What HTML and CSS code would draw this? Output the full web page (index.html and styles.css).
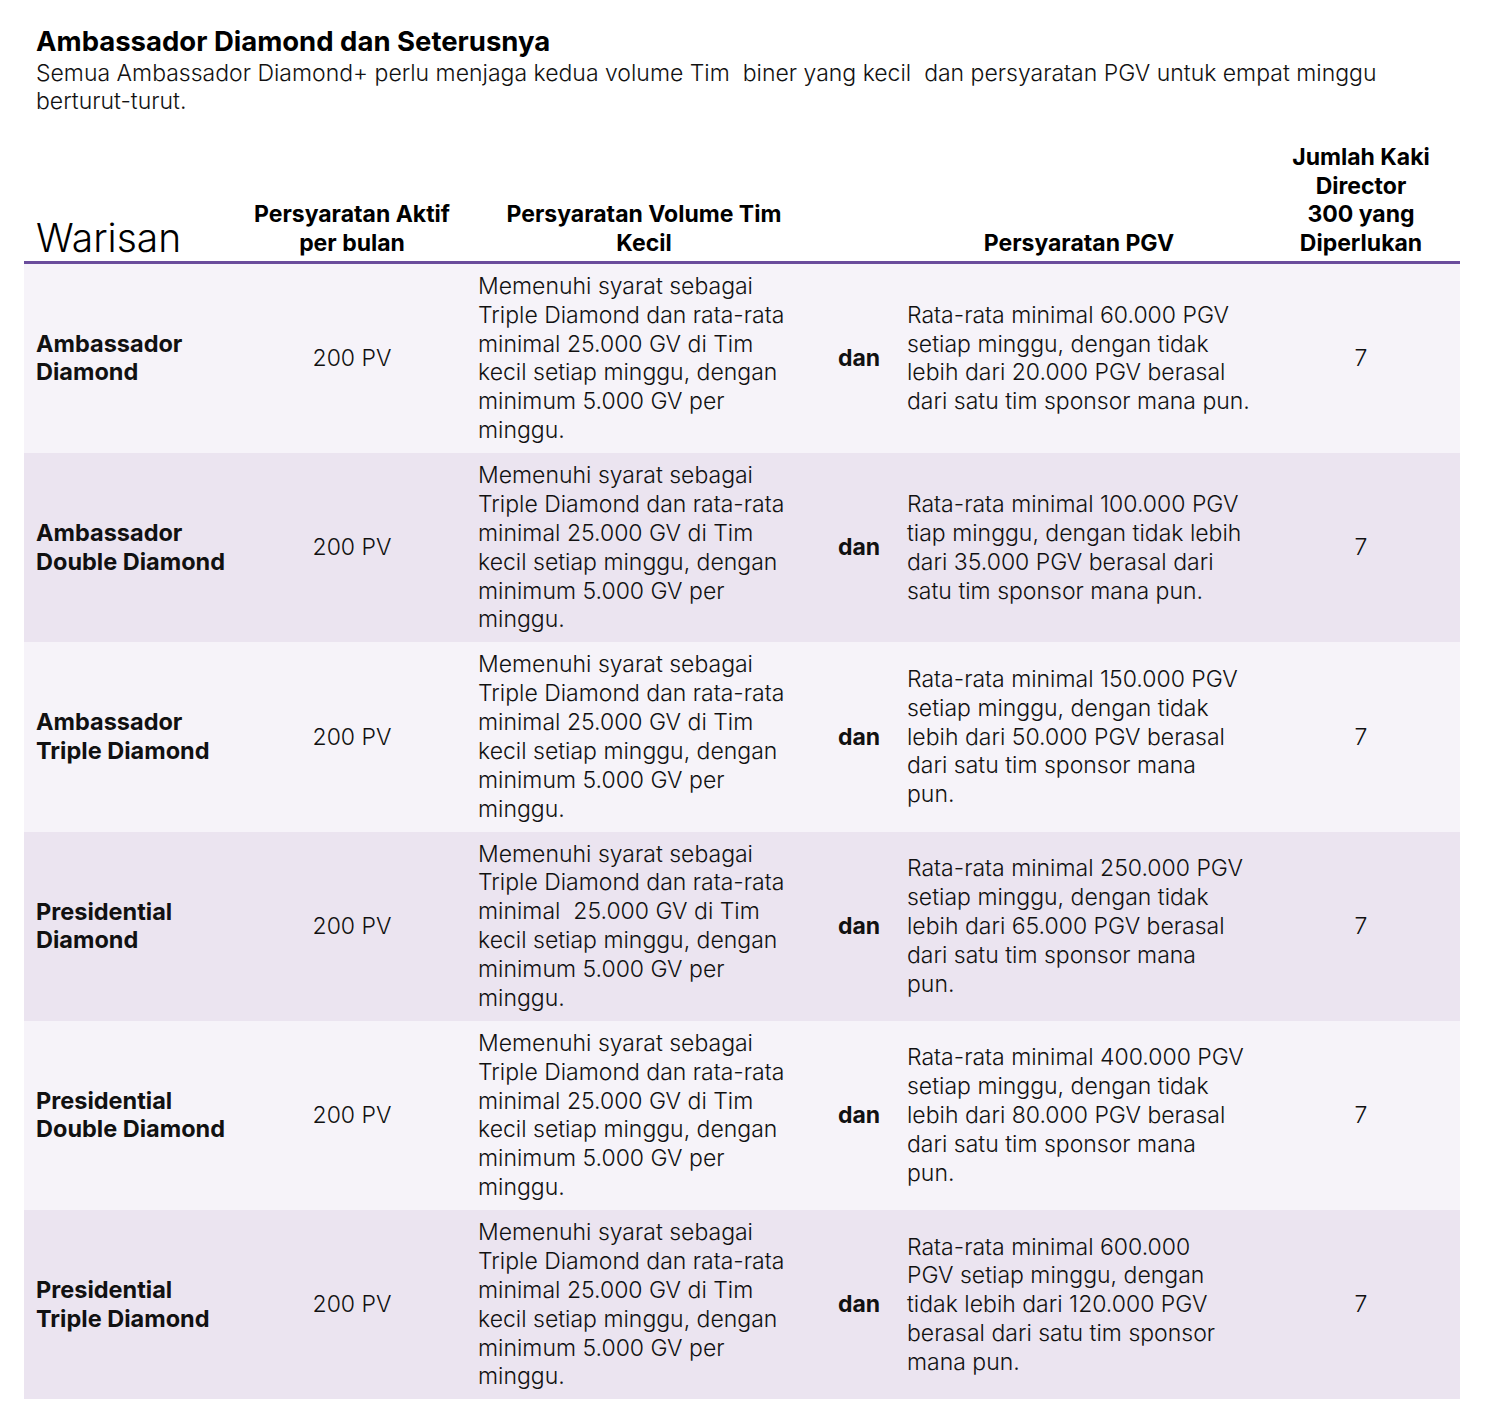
FILE: index.html
```html
<!DOCTYPE html>
<html lang="id">
<head>
<meta charset="utf-8">
<title>Ambassador Diamond dan Seterusnya</title>
<link rel="stylesheet" href="styles.css">
</head>
<body>
<main class="page">
  <h1 class="title">Ambassador Diamond dan Seterusnya</h1>
  <p class="lead">Semua Ambassador Diamond+ perlu menjaga kedua volume Tim&nbsp; biner yang kecil&nbsp; dan persyaratan PGV untuk empat minggu<br>berturut-turut.</p>

  <table class="ranks">
    <colgroup>
      <col class="w-rank">
      <col class="w-active">
      <col class="w-volume">
      <col class="w-and">
      <col class="w-pgv">
      <col class="w-legs">
    </colgroup>
    <thead>
      <tr>
        <th class="h-rank">Warisan</th>
        <th class="h-center">Persyaratan Aktif<br>per bulan</th>
        <th class="h-center">Persyaratan Volume Tim<br>Kecil</th>
        <th></th>
        <th class="h-center">Persyaratan PGV</th>
        <th class="h-center">Jumlah Kaki<br>Director<br>300 yang<br>Diperlukan</th>
      </tr>
    </thead>
    <tbody>
      <tr>
        <td class="rank">Ambassador<br>Diamond</td>
        <td class="center">200 PV</td>
        <td class="text">Memenuhi syarat sebagai<br>Triple Diamond dan rata-rata<br>minimal 25.000 GV di Tim<br>kecil setiap minggu, dengan<br>minimum 5.000 GV per<br>minggu.</td>
        <td class="and">dan</td>
        <td class="text pgv">Rata-rata minimal 60.000 PGV<br>setiap minggu, dengan tidak<br>lebih dari 20.000 PGV berasal<br>dari satu tim sponsor mana pun.</td>
        <td class="center">7</td>
      </tr>
      <tr>
        <td class="rank">Ambassador<br>Double Diamond</td>
        <td class="center">200 PV</td>
        <td class="text">Memenuhi syarat sebagai<br>Triple Diamond dan rata-rata<br>minimal 25.000 GV di Tim<br>kecil setiap minggu, dengan<br>minimum 5.000 GV per<br>minggu.</td>
        <td class="and">dan</td>
        <td class="text pgv">Rata-rata minimal 100.000 PGV<br>tiap minggu, dengan tidak lebih<br>dari 35.000 PGV berasal dari<br>satu tim sponsor mana pun.</td>
        <td class="center">7</td>
      </tr>
      <tr>
        <td class="rank">Ambassador<br>Triple Diamond</td>
        <td class="center">200 PV</td>
        <td class="text">Memenuhi syarat sebagai<br>Triple Diamond dan rata-rata<br>minimal 25.000 GV di Tim<br>kecil setiap minggu, dengan<br>minimum 5.000 GV per<br>minggu.</td>
        <td class="and">dan</td>
        <td class="text pgv">Rata-rata minimal 150.000 PGV<br>setiap minggu, dengan tidak<br>lebih dari 50.000 PGV berasal<br>dari satu tim sponsor mana<br>pun.</td>
        <td class="center">7</td>
      </tr>
      <tr>
        <td class="rank">Presidential<br>Diamond</td>
        <td class="center">200 PV</td>
        <td class="text">Memenuhi syarat sebagai<br>Triple Diamond dan rata-rata<br>minimal&nbsp; 25.000 GV di Tim<br>kecil setiap minggu, dengan<br>minimum 5.000 GV per<br>minggu.</td>
        <td class="and">dan</td>
        <td class="text pgv">Rata-rata minimal 250.000 PGV<br>setiap minggu, dengan tidak<br>lebih dari 65.000 PGV berasal<br>dari satu tim sponsor mana<br>pun.</td>
        <td class="center">7</td>
      </tr>
      <tr>
        <td class="rank">Presidential<br>Double Diamond</td>
        <td class="center">200 PV</td>
        <td class="text">Memenuhi syarat sebagai<br>Triple Diamond dan rata-rata<br>minimal 25.000 GV di Tim<br>kecil setiap minggu, dengan<br>minimum 5.000 GV per<br>minggu.</td>
        <td class="and">dan</td>
        <td class="text pgv">Rata-rata minimal 400.000 PGV<br>setiap minggu, dengan tidak<br>lebih dari 80.000 PGV berasal<br>dari satu tim sponsor mana<br>pun.</td>
        <td class="center">7</td>
      </tr>
      <tr>
        <td class="rank">Presidential<br>Triple Diamond</td>
        <td class="center">200 PV</td>
        <td class="text">Memenuhi syarat sebagai<br>Triple Diamond dan rata-rata<br>minimal 25.000 GV di Tim<br>kecil setiap minggu, dengan<br>minimum 5.000 GV per<br>minggu.</td>
        <td class="and">dan</td>
        <td class="text pgv">Rata-rata minimal 600.000<br>PGV setiap minggu, dengan<br>tidak lebih dari 120.000 PGV<br>berasal dari satu tim sponsor<br>mana pun.</td>
        <td class="center">7</td>
      </tr>
    </tbody>
  </table>
</main>
</body>
</html>
```

FILE: styles.css
```css
* {
  box-sizing: border-box;
}

body {
  margin: 0;
  background: #ffffff;
  color: #111111;
  font-family: Inter, Roboto, "Liberation Sans", Arial, sans-serif;
}

.page {
  padding: 26px 24px 24px 24px;
}

.title {
  margin: 0 0 3px 12px;
  font-size: 27.5px;
  line-height: 31px;
  font-weight: 700;
  color: #000000;
}

.lead {
  margin: 0 0 28px 12px;
  font-size: 23px;
  line-height: 27.5px;
  font-weight: 300;
}

.ranks {
  width: 1436px;
  border-collapse: collapse;
  table-layout: fixed;
}

.w-rank { width: 214px; }
.w-active { width: 228px; }
.w-volume { width: 356px; }
.w-and { width: 74px; }
.w-pgv { width: 366px; }
.w-legs { width: 198px; }

.ranks th {
  vertical-align: bottom;
  padding: 0 4px 3px 4px;
  font-size: 23px;
  line-height: 28.7px;
  font-weight: 700;
  color: #000000;
  border-bottom: 3px solid #6a4c9c;
  white-space: nowrap;
}

.ranks th.h-rank {
  text-align: left;
  padding-left: 12px;
  font-size: 39px;
  line-height: 40px;
  font-weight: 300;
}

.ranks th.h-center {
  text-align: center;
}

.ranks tbody tr:nth-child(odd) {
  background: #f6f3f9;
}

.ranks tbody tr:nth-child(even) {
  background: #ebe4f0;
}

.ranks td {
  vertical-align: middle;
  padding: 8px 12px;
  font-size: 23px;
  line-height: 28.87px;
  font-weight: 300;
  white-space: nowrap;
}

.ranks td.rank {
  font-size: 23.5px;
  font-weight: 700;
  line-height: 28.5px;
  padding-right: 0;
}

.ranks td.center {
  text-align: center;
}

.ranks td.and {
  text-align: center;
  font-weight: 700;
  padding: 8px 0;
}

.ranks td.pgv {
  padding-left: 11px;
}
```
